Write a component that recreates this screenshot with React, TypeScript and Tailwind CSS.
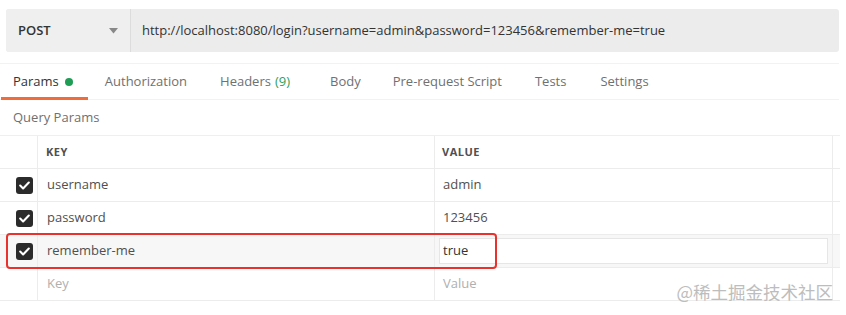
import React from "react";

const Check = () => (
  <div className="w-[17px] h-[17px] rounded-[3px] bg-[#2b2b2b] flex items-center justify-center">
    <svg width="11" height="9" viewBox="0 0 11 9" fill="none">
      <path d="M1.2 4.6 L4.1 7.4 L9.8 1.6" stroke="white" strokeWidth="2.1" strokeLinecap="round" strokeLinejoin="round" />
    </svg>
  </div>
);

type Row = { k: string; v: string; checked: boolean; hl?: boolean; placeholder?: boolean };

const rows: Row[] = [
  { k: "username", v: "admin", checked: true },
  { k: "password", v: "123456", checked: true },
  { k: "remember-me", v: "true", checked: true, hl: true },
  { k: "Key", v: "Value", checked: false, placeholder: true },
];

export default function App() {
  return (
    <div
      className="w-[846px] h-[315px] bg-white relative overflow-hidden text-[13px] text-[#333]"
      style={{ fontFamily: '"Open Sans", "Noto Sans", sans-serif' }}
    >
      {/* URL bar */}
      <div className="pt-[9px] pl-[6px] pr-[7px]">
        <div className="flex h-[43px] rounded-[3px] bg-[#ececec]">
          <div className="w-[125px] flex items-center justify-between pl-[12px] pr-[12px] border-r border-[#dcdcdc] bg-[#efefef] rounded-l-[3px]">
            <span className="font-semibold text-[#333] text-[13px]">POST</span>
            <svg width="9" height="6" viewBox="0 0 9 6"><path d="M0 0 L9 0 L4.5 5.5 Z" fill="#888" /></svg>
          </div>
          <div className="flex items-center pl-[11px] text-[#333] text-[13px]">
            http://localhost:8080/login?username=admin&amp;password=123456&amp;remember-me=true
          </div>
        </div>
      </div>

      {/* Tabs */}
      <div className="mt-[11px] mr-[7px] h-[37px] border-t border-[#f2f2f2] border-b border-[#e6e6e6] flex items-stretch text-[13px] text-[#707070]">
        <div className="relative ml-[1px] pl-[12px] pr-[15px] flex items-center text-[#333]">
          Params
          <span className="ml-[6px] w-[8px] h-[8px] rounded-full bg-[#1f9d55] inline-block" />
          <div className="absolute left-0 right-0 bottom-[-1px] h-[3px] bg-[#f26b3a]" />
        </div>
        <div className="pl-[17px] pr-[17px] flex items-center">Authorization</div>
        <div className="pl-[16px] pr-[21px] flex items-center">
          Headers<span className="ml-[4px] text-[#2e9f5b]">(9)</span>
        </div>
        <div className="pl-[19px] pr-[16px] flex items-center">Body</div>
        <div className="pl-[16px] pr-[17px] flex items-center">Pre-request Script</div>
        <div className="pl-[16px] pr-[16px] flex items-center">Tests</div>
        <div className="pl-[18px] pr-[16px] flex items-center">Settings</div>
      </div>

      {/* Query Params label */}
      <div className="h-[35px] flex items-center pl-[13px] text-[#707070] text-[13px]">Query Params</div>

      {/* Table */}
      <div className="w-[840px] border-t border-[#efefef]">
        <div className="flex h-[33px] border-b border-[#ececec] text-[11px] font-bold text-[#505050] tracking-[0.5px]">
          <div className="w-[38px] border-r border-[#ececec]" />
          <div className="w-[397px] border-r border-[#ececec] flex items-center pl-[8px]">KEY</div>
          <div className="w-[398px] border-r border-[#ececec] flex items-center pl-[7px]">VALUE</div>
          <div className="flex-1" />
        </div>
        {rows.map((r, i) => (
          <div
            key={i}
            className={`flex h-[33px] border-b border-[#ececec] ${r.hl ? "bg-[#f7f7f7]" : ""} ${
              r.placeholder ? "text-[#b0b0b0]" : "text-[#505050]"
            }`}
          >
            <div className="w-[38px] border-r border-[#ececec] flex items-center pl-[16px]">
              {r.checked && <Check />}
            </div>
            <div className="w-[397px] border-r border-[#ececec] flex items-center pl-[9px]">{r.k}</div>
            <div className="w-[398px] border-r border-[#ececec] flex items-center pl-[4px] pr-[4px] py-[3px]">
              {r.hl ? (
                <div className="flex-1 h-full bg-white border border-[#e6e6e6] flex items-center pl-[3px] text-[#333]">
                  {r.v}
                </div>
              ) : (
                <span className="pl-[4px]">{r.v}</span>
              )}
            </div>
            <div className="flex-1" />
          </div>
        ))}
      </div>

      {/* red highlight box */}
      <div className="absolute left-[6px] top-[233px] w-[491px] h-[36px] border-2 border-[#e8322b] rounded-[4px] pointer-events-none" />

      {/* watermark */}
      <div
        className="absolute right-[13px] top-[283px] text-[17.5px] text-[#bdbdbd] leading-none"
        style={{ fontFamily: '"Noto Sans CJK SC", "Noto Sans", sans-serif' }}
      >
        @稀土掘金技术社区
      </div>
    </div>
  );
}
